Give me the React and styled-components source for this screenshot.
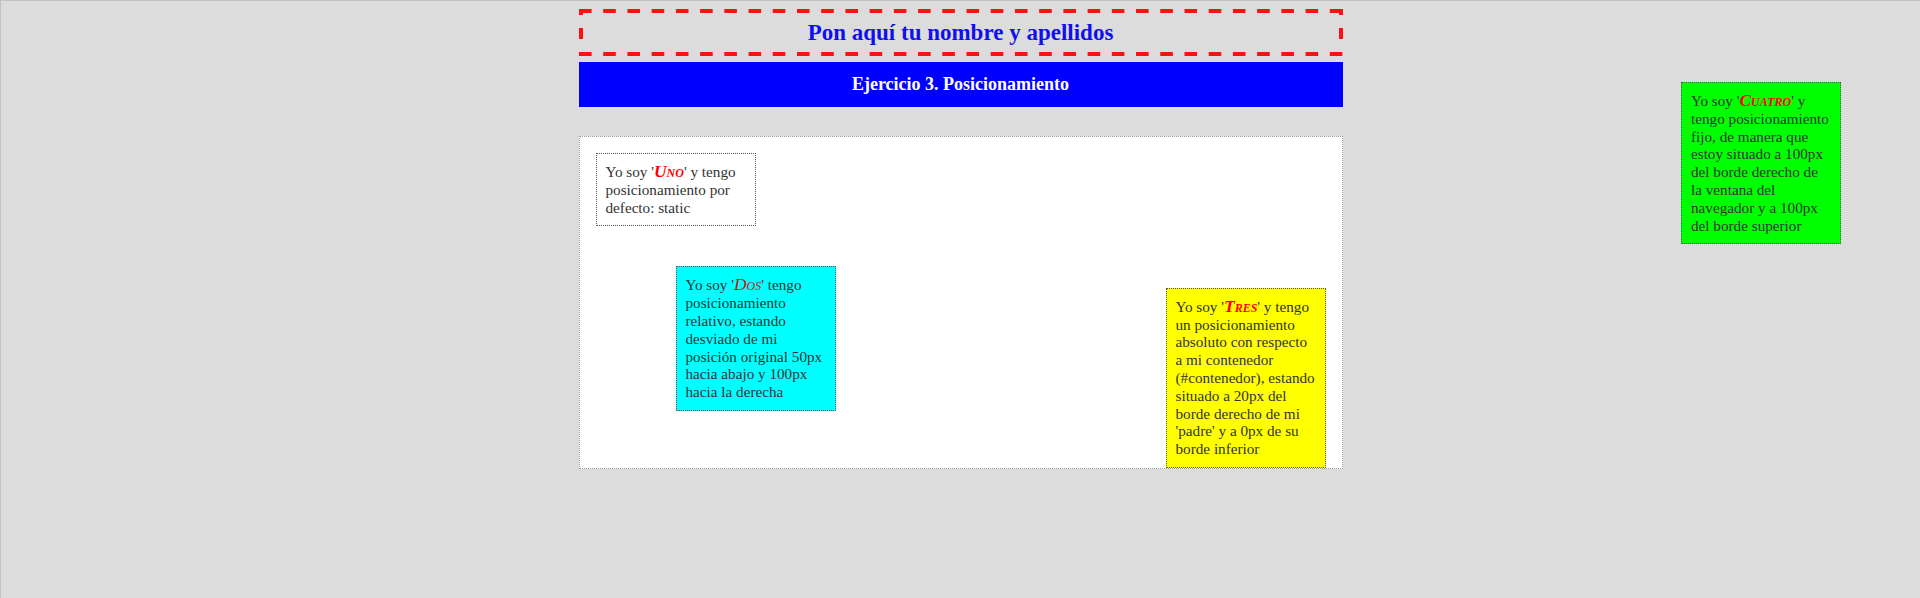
import React from "react";
import styled, { createGlobalStyle } from "styled-components";

const GlobalStyle = createGlobalStyle`
  html {
    background: #dcdcdc;
    border-top: 1px solid #c2c2c2;
    border-left: 1px solid #c2c2c2;
    min-height: 100%;
  }
  body {
    margin: 8px;
    font-family: "Liberation Serif", "Times New Roman", serif;
    color: #333;
  }
`;

const Page = styled.div`
  width: 764px;
  margin: 0 auto;
  display: flex;
  flex-direction: column;
`;

const RED = "#ff1010";

const Header = styled.header`
  box-sizing: border-box;
  height: 47px;
  padding: 4px;
  display: flex;
  align-items: center;
  justify-content: center;
  background:
    linear-gradient(90deg, ${RED} 13px, transparent 13px) left top / 24.226px 4px repeat-x,
    linear-gradient(90deg, ${RED} 13px, transparent 13px) left bottom / 24.226px 4px repeat-x,
    linear-gradient(180deg, ${RED} 0 6px, transparent 6px 19px, ${RED} 19px 30px, transparent 30px) left top / 4px 100% no-repeat,
    linear-gradient(180deg, ${RED} 0 6px, transparent 6px 19px, ${RED} 19px 30px, transparent 30px) right top / 4px 100% no-repeat;
`;

const Title = styled.h1`
  margin: 0;
  font-size: 23px;
  font-weight: bold;
  color: #1010ee;
  line-height: 39px;
`;

const Banner = styled.h2`
  margin: 6px 0 0;
  height: 45px;
  background: #0000ff;
  color: #ffffff;
  font-size: 18px;
  font-weight: bold;
  line-height: 45px;
  text-align: center;
`;

const Contenedor = styled.section`
  position: relative;
  box-sizing: border-box;
  margin-top: 29px;
  height: 333px;
  padding: 16px;
  background: #ffffff;
  border: 1px dotted #9a9a9a;
`;

const Caja = styled.div`
  width: 140px;
  padding: 9px;
  border: 1px dotted #555;
  background: ${(p) => p.$bg};
  font-size: 15.2px;
  line-height: 17.8px;
  color: #333;
`;

const Uno = styled(Caja)``;

const Dos = styled(Caja)`
  position: relative;
  left: 80px;
  top: 40px;
`;

const Tres = styled(Caja)`
  position: absolute;
  right: 16px;
  bottom: 0;
`;

const Cuatro = styled(Caja)`
  position: fixed;
  right: 79px;
  top: 82px;
`;

const Nombre = styled.span`
  color: ${(p) => p.$color || "#ff0000"};
  font-style: italic;
  font-variant: small-caps;
  font-weight: ${(p) => (p.$bold ? "bold" : "normal")};
  font-size: 1.15em;
`;

export default function App() {
  return (
    <>
      <GlobalStyle />
      <Page>
        <Header>
          <Title>Pon aquí tu nombre y apellidos</Title>
        </Header>
        <Banner>Ejercicio 3. Posicionamiento</Banner>
        <Contenedor>
          <Uno $bg="#ffffff">
            Yo soy '<Nombre $bold>Uno</Nombre>' y tengo posicionamiento por
            defecto: static
          </Uno>
          <Dos $bg="#00ffff">
            Yo soy '<Nombre $color="#d01010">Dos</Nombre>' tengo posicionamiento relativo,
            estando desviado de mi posición original 50px hacia abajo y 100px
            hacia la derecha
          </Dos>
          <Tres $bg="#ffff00">
            Yo soy '<Nombre $bold>Tres</Nombre>' y tengo un posicionamiento
            absoluto con respecto a mi contenedor (#contenedor), estando
            situado a 20px del borde derecho de mi 'padre' y a 0px de su borde
            inferior
          </Tres>
        </Contenedor>
      </Page>
      <Cuatro $bg="#00ff00">
        Yo soy '<Nombre $bold>Cuatro</Nombre>' y tengo posicionamiento fijo,
        de manera que estoy situado a 100px del borde derecho de la ventana del
        navegador y a 100px del borde superior
      </Cuatro>
    </>
  );
}
